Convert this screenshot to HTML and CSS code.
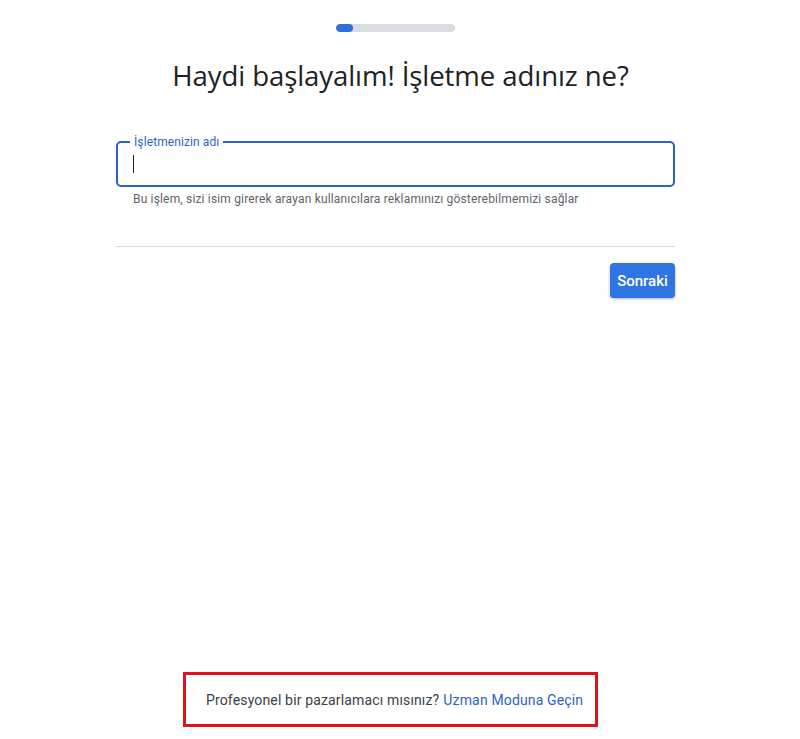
FILE: index.html
```html
<!DOCTYPE html>
<html lang="tr">
<head>
<meta charset="utf-8">
<link rel="stylesheet" href="styles.css">
</head>
<body>
<div class="page">
  <div class="progress"><div class="progress-fill"></div></div>
  <h1 class="title">Haydi başlayalım! İşletme adınız ne?</h1>
  <div class="form">
    <div class="field">
      <span class="field-label">İşletmenizin adı</span>
      <span class="cursor"></span>
    </div>
    <div class="helper">Bu işlem, sizi isim girerek arayan kullanıcılara reklamınızı gösterebilmemizi sağlar</div>
    <div class="divider"></div>
    <div class="actions"><button class="btn">Sonraki</button></div>
  </div>
  <div class="spacer"></div>
  <div class="footer">
    <div class="highlight">Profesyonel bir pazarlamacı mısınız? <a class="link">Uzman Moduna Geçin</a></div>
  </div>
</div>
</body>
</html>
```
FILE: styles.css
```css
html, body { margin: 0; padding: 0; background: #fff; }
body { font-family: Roboto, "Noto Sans", sans-serif; color: #202124; }
.page { min-height: 739px; display: flex; flex-direction: column; box-sizing: border-box; }
.progress { width: 119px; height: 8px; border-radius: 4px; background: #dadce0; margin: 24px 0 0 336px; overflow: hidden; }
.progress-fill { width: 17px; height: 100%; background: #2f6fd9; border-radius: 4px; }
.title { font-family: "Open Sans", Roboto, sans-serif; font-weight: 400; font-size: 27.6px; margin: 25px 0 0 0; text-align: center; padding-left: 1px; color: #202124; letter-spacing: -0.1px; line-height: 36px; }
.form { width: 559px; margin: 48px 0 0 116px; }
.field { position: relative; height: 46px; box-sizing: border-box; border: 2px solid #2b63c4; border-radius: 5px; display: flex; align-items: center; padding-left: 15px; }
.field-label { position: absolute; top: -9px; left: 12px; padding: 0 4px; background: #fff; font-size: 12px; line-height: 16px; color: #2b63c4; letter-spacing: 0.1px; }
.cursor { width: 1px; height: 18px; background: #202124; }
.helper { font-size: 12px; line-height: 16px; color: #5f6368; margin: 4px 0 0 17px; letter-spacing: 0.17px; }
.divider { height: 1px; background: #dadce0; margin-top: 39px; }
.actions { display: flex; justify-content: flex-end; margin-top: 16px; }
.btn { width: 65px; height: 35px; border: none; border-radius: 4px; background: #2f74e3; color: #fff; font-family: Roboto, sans-serif; font-weight: 500; font-size: 15px; box-shadow: 0 1px 3px rgba(0,0,0,0.3); padding: 0; }
.spacer { flex: 1; }
.footer { padding-bottom: 12px; padding-left: 183px; }
.highlight { width: 415px; height: 55px; box-sizing: border-box; border: 3px solid #e0131c; display: flex; align-items: center; padding-left: 20px; font-size: 14px; color: #3c4043; letter-spacing: 0.15px; }
.link { color: #2b63c4; margin-left: 4px; }
```
